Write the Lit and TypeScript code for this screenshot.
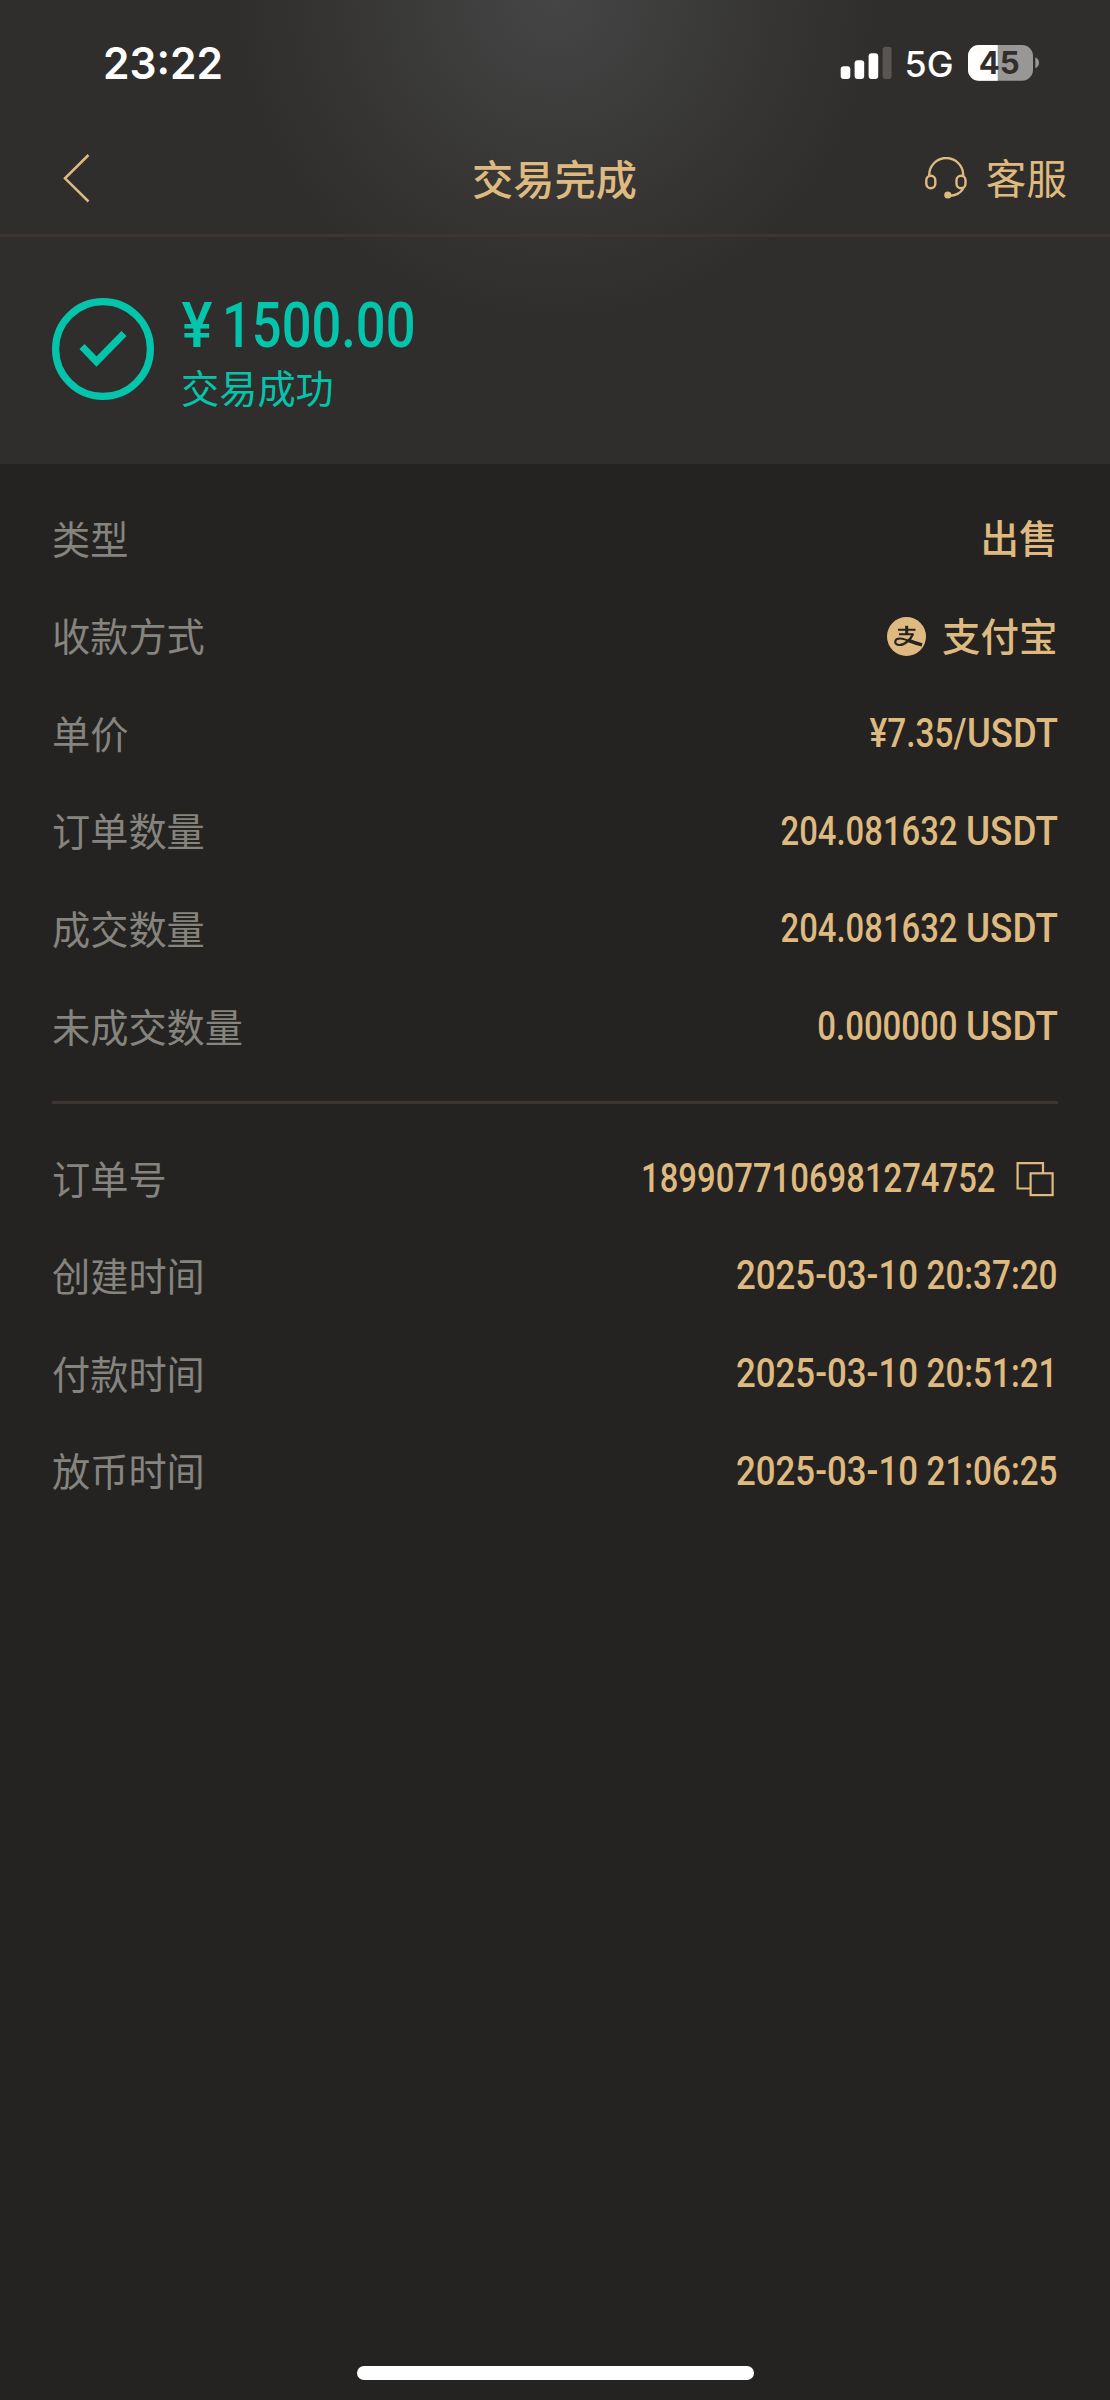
import { LitElement, html, css, svg } from "lit";
import { customElement, property } from "lit/decorators.js";

/** x and w are in pixels; k is the horizontal condensing factor of the glyphs. */
type Segment = { text: string; x: number; w: number; k?: number };
type Row = { label: string; value?: string; segs?: Segment[]; icon?: "alipay" | "copy" };

/** One line of narrow figures, laid out in segments of fixed width. */
@customElement("fixed-text")
class FixedText extends LitElement {
  @property({ attribute: false }) segs: Segment[] = [];
  @property({ type: Number }) width = 100;
  @property({ type: Number }) height = 40;
  @property({ type: Number }) baseline = 30;
  static styles = css`
    :host { display: block; flex: none; }
    svg { display: block; overflow: visible; fill: currentColor; }
  `;
  render() {
    return html`<svg width=${this.width} height=${this.height}>
      ${this.segs.map((s) => {
        const k = s.k ?? 0.83;
        return svg`<text transform="translate(${s.x} ${this.baseline}) scale(${k} 1)" textLength=${s.w / k} lengthAdjust="spacingAndGlyphs">${s.text}</text>`;
      })}
    </svg>`;
  }
}

const usdt: Segment = { text: "USDT", x: 366, w: 92, k: 0.91 };
const stamp = (date: string, time: string): Segment[] => [
  { text: date, x: 136, w: 182 },
  { text: time, x: 326.5, w: 131 },
];

const trade: Row[] = [
  { label: "类型", value: "出售" },
  { label: "收款方式", value: "支付宝", icon: "alipay" },
  { label: "单价", segs: [{ text: "¥7.35/", x: 269.5, w: 97 }, { text: "USDT", x: 367, w: 91, k: 0.9 }] },
  { label: "订单数量", segs: [{ text: "204.081632", x: 180.5, w: 177 }, usdt] },
  { label: "成交数量", segs: [{ text: "204.081632", x: 180.5, w: 177 }, usdt] },
  { label: "未成交数量", segs: [{ text: "0.000000", x: 217.3, w: 140.2 }, usdt] },
];

const order: Row[] = [
  { label: "订单号", segs: [{ text: "1899077106981274752", x: 41, w: 354.5 }], icon: "copy" },
  { label: "创建时间", segs: stamp("2025-03-10", "20:37:20") },
  { label: "付款时间", segs: stamp("2025-03-10", "20:51:21") },
  { label: "放币时间", segs: stamp("2025-03-10", "21:06:25") },
];

@customElement("app-root")
class AppRoot extends LitElement {
  static styles = css`
    :host {
      display: flex;
      flex-direction: column;
      width: 1110px;
      height: 2400px;
      background: #242321;
      color: #dfba80;
      font-family: "Noto Sans CJK SC", sans-serif;
      overflow: hidden;
    }
    * { box-sizing: border-box; }
    svg { display: block; flex: none; }
    .top {
      height: 464px;
      flex: none;
      background:
        radial-gradient(circle 325px at 555px 0, #454546 0%, #3c3c3b 38%, #353432 70%, #2f2e2c 100%);
    }
    .status {
      height: 124px;
      display: flex;
      justify-content: space-between;
      padding: 0 71px 0 103px;
      color: #fff;
      font-family: Inter, sans-serif;
    }
    .clock { font-size: 44px; font-weight: 600; }
    .right { display: flex; }
    .net { font-size: 35px; font-weight: 500; }
    .pct { font-size: 31px; font-weight: 700; fill: #2f2e2c; }
    .nav {
      height: 113px;
      display: grid;
      grid-template-columns: 1fr auto 1fr;
      align-items: center;
      padding: 0 43px 3px 63px;
      border-bottom: 3px solid #3c3531;
    }
    .title { font-size: 41.2px; font-weight: 500; line-height: 60px; padding: 0 21px 1px 0; }
    .help { display: flex; justify-content: flex-end; align-items: center; gap: 19px; font-size: 40.6px; line-height: 60px; }
    .help span { padding-bottom: 1px; }
    .result { display: flex; padding: 61px 52px 0; gap: 27px; color: #04c5ab; }
    .sum { font-family: Roboto, sans-serif; font-weight: 500; font-size: 62.5px; }
    .state { font-size: 38.2px; line-height: 56px; margin-top: 1px; }
    .list { margin: 0 52px; padding-top: 26px; display: flex; flex-direction: column; }
    .list.second { border-top: 3px solid #3c3531; margin-top: 25.4px; padding-top: 26px; }
    .row { height: 97.6px; display: flex; align-items: center; justify-content: space-between; font-size: 38.2px; line-height: 56px; }
    .label { color: #85847f; padding-bottom: 2.4px; }
    .value { display: flex; align-items: center; font-weight: 500; gap: 16px; }
    .copyable { gap: 15px; }
    .name { padding: 0 0.5px 5px 0; font-size: 38.5px; }
    .figures { font-family: Roboto, sans-serif; font-weight: 500; font-size: 39.8px; }
    .home { margin: auto auto 20.5px 357px; width: 397px; height: 13.5px; border-radius: 7px; background: #fff; }
  `;

  private row(r: Row) {
    const copy = r.icon === "copy";
    return html`<div class="row">
      <span class="label">${r.label}</span>
      <div class="value ${copy ? "copyable" : ""}">
        ${r.icon === "alipay" ? this.alipay() : ""}
        ${r.segs
          ? html`<fixed-text class="figures" .segs=${r.segs} .width=${copy ? 396 : 458} .height=${40} .baseline=${33.4}></fixed-text>`
          : html`<span class="name">${r.value}</span>`}
        ${copy
          ? html`<svg width="47" height="40" viewBox="-5 0 47 40" fill="none" stroke="currentColor" stroke-width="2.2">
              <path d="M14 29.500H1.600V4.200H27V14" /><rect x="14.600" y="14.300" width="22" height="21.800" />
            </svg>`
          : ""}
      </div>
    </div>`;
  }

  private alipay() {
    return html`<svg width="39" height="39" viewBox="0 0 39 39" fill="none" stroke="#242321">
      <circle cx="19.5" cy="19.5" r="19.5" fill="#dfba80" stroke="none" />
      <path stroke-width="2" d="M11 12.800H28.500M12 17.200H26.500" />
      <path stroke-width="3" d="M19.700 8.800V17" />
      <path stroke-width="2.200" d="M26 17C24 22 18 28 12.500 28C6.500 28 7 21.500 13 21.500C17 21.500 20 23 24 25" />
      <path stroke-width="3.400" d="M22 23.600C26 25.200 30 26.600 35 27.800" />
    </svg>`;
  }

  render() {
    return html`
      <div class="top">
        <div class="status">
          <fixed-text class="clock" .segs=${[{ text: "23:22", x: 0, w: 120, k: 1 }]} .width=${120} .height=${100} .baseline=${79}></fixed-text>
          <div class="right">
            <svg width="62" height="100" fill="#fff">
              <rect x="2.700" y="66.300" width="9.600" height="12.700" rx="3" />
              <rect x="16.600" y="60.300" width="9.600" height="18.700" rx="3" />
              <rect x="30.600" y="53.300" width="9.600" height="25.700" rx="3" />
              <rect x="44.600" y="46.700" width="9" height="32.300" rx="3" fill="#595553" />
            </svg>
            <fixed-text class="net" .segs=${[{ text: "5G", x: 4.5, w: 49, k: 1 }]} .width=${68} .height=${100} .baseline=${77.3}></fixed-text>
            <svg width="71" height="100">
              <defs><clipPath id="cell"><rect y="45" width="65" height="35.700" rx="11" /></clipPath></defs>
              <g clip-path="url(#cell)">
                <rect y="45" width="65" height="36" fill="#989795" />
                <rect y="45" width="29.700" height="36" fill="#fff" />
              </g>
              <path d="M67.300 57.300Q71 59 71 62.800T67.300 68.300Z" fill="#989795" />
              <text class="pct" x="10.800" y="74.300" textLength="41" lengthAdjust="spacingAndGlyphs">45</text>
            </svg>
          </div>
        </div>
        <div class="nav">
          <svg width="28" height="50" viewBox="0 0 28 50" fill="none" stroke="currentColor" stroke-width="2.500"><path d="M25.500 2L2 25.300L25.500 48.500" /></svg>
          <div class="title">交易完成</div>
          <div class="help">
            <svg width="42" height="42" viewBox="0 0 42 42" fill="none" stroke="currentColor" stroke-width="2.400">
              <path d="M4.200 19V18A17 17 0 0 1 38.200 18V19M38.500 31C36 36 30 39 24 38.800" />
              <rect x="1.300" y="18.800" width="9" height="12.500" rx="4.500" />
              <rect x="31.500" y="18.800" width="9" height="12.500" rx="4.500" />
              <circle cx="22.800" cy="38" r="3.600" fill="currentColor" stroke="none" />
            </svg>
            <span>客服</span>
          </div>
        </div>
        <div class="result">
          <svg width="102" height="102" viewBox="0 0 102 102" fill="none" stroke="currentColor" stroke-width="7.200">
            <circle cx="51" cy="51" r="47.400" /><path d="M30 48.500L44.500 63.500L72 35.500" />
          </svg>
          <div>
            <fixed-text class="sum" .segs=${[{ text: "¥", x: 0.5, w: 31 }, { text: "1500.00", x: 41, w: 193.5 }]} .width=${240} .height=${60} .baseline=${48.7}></fixed-text>
            <div class="state">交易成功</div>
          </div>
        </div>
      </div>
      <div class="list">${trade.map((r) => this.row(r))}</div>
      <div class="list second">${order.map((r) => this.row(r))}</div>
      <div class="home"></div>
    `;
  }
}
